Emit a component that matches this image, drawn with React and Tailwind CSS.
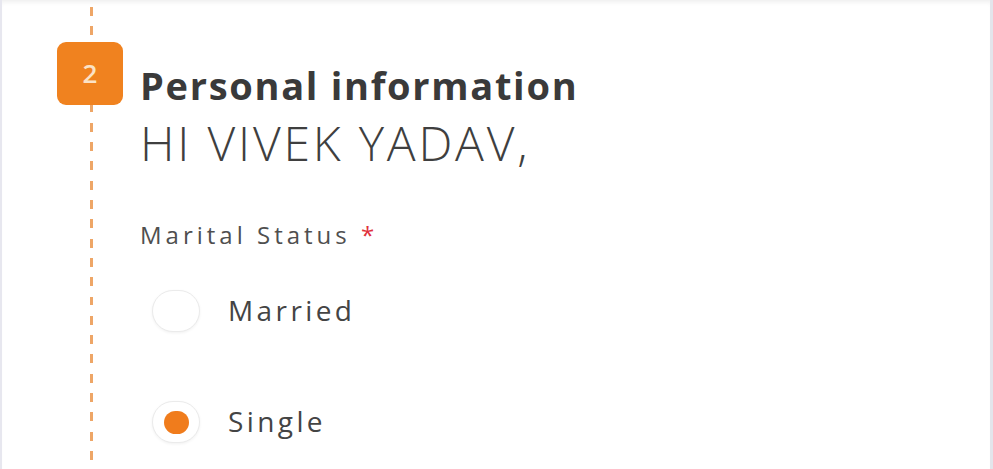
import { useState } from 'react'

const OPTIONS = ['Married', 'Single']

function Radio({ label, checked, onSelect }) {
  return (
    <button
      type="button"
      onClick={onSelect}
      className="flex items-center text-left"
    >
      <span className="ml-[12px] flex h-[42px] w-[48px] items-center justify-center rounded-full border border-[#ebebeb] bg-white shadow-[0_1px_3px_rgba(0,0,0,0.06)]">
        {checked && <span className="h-[23px] w-[25px] rounded-full bg-[#f07c1c]" />}
      </span>
      <span className="ml-[28px] -mt-[3px] text-[28px] leading-none tracking-[3.4px] text-[#444]">{label}</span>
    </button>
  )
}

export default function App() {
  const [status, setStatus] = useState('Single')

  return (
    <div
      className="relative h-[469px] w-[993px] overflow-hidden border-l-2 border-r-[3px] border-l-[#e7e7ef] border-r-[#e3e5eb] bg-white shadow-[inset_0_5px_5px_-3px_rgba(0,0,0,0.07)]"
      style={{ fontFamily: '"Open Sans", Lato, sans-serif' }}
    >
      <div className="flex h-full">
        {/* step rail */}
        <div className="relative ml-[55px] w-[66px] shrink-0">
          <div className="absolute bottom-0 left-[33px] top-0 w-[3px] bg-[repeating-linear-gradient(to_bottom,transparent_0_7px,#eea667_7px_16px,transparent_16px_19.3px)]" />
          <div className="relative mt-[42px] flex h-[63px] w-[66px] items-center justify-center rounded-[9px] bg-[#f0821f] text-[26px] font-semibold text-[#fbe2c6]">
            2
          </div>
        </div>

        <div className="ml-[17px] flex flex-col">
          <h2 className="mt-[66px] text-[38px] font-bold leading-none tracking-[1.7px] text-[#3a3a3a]">Personal information</h2>
          <p className="mt-[15px] text-[48px] font-light leading-none tracking-[2.8px] text-[#3f3f3f]">HI VIVEK YADAV,</p>

          <label className="mt-[56px] text-[24px] leading-none tracking-[4px] text-[#4f4f4f]">
            Marital Status <span className="text-[#e0323c]">*</span>
          </label>

          <div className="mt-[43px] flex flex-col gap-[69px]">
            {OPTIONS.map(o => (
              <Radio key={o} label={o} checked={status === o} onSelect={() => setStatus(o)} />
            ))}
          </div>
        </div>
      </div>
    </div>
  )
}
